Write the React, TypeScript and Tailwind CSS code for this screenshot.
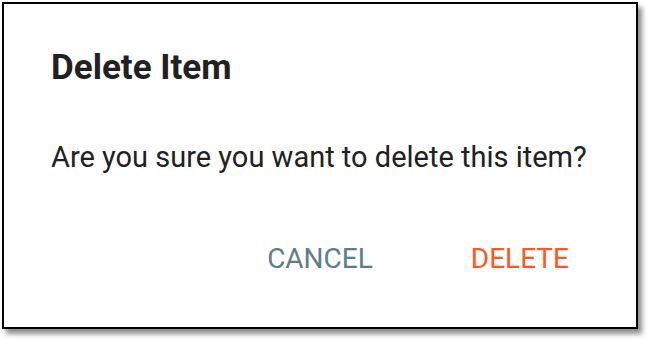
import React from 'react';

const App: React.FC = () => {
  return (
    <div className="w-[648px] h-[340px] bg-white p-[2px]" style={{ fontFamily: 'Roboto, "Liberation Sans", sans-serif' }}>
      <div className="w-[636px] h-[327px] border-2 border-black bg-white shadow-[4px_5px_5px_rgba(0,0,0,0.45)] flex flex-col">
        {/* Title */}
        <h2 className="pl-[47px] pt-[38px] text-[35px] leading-[52px] font-bold text-[#212121]">
          Delete Item
        </h2>

        {/* Body */}
        <p className="pl-[47px] pt-[43px] text-[29px] leading-[40px] text-[#212121]">
          Are you sure you want to delete this item?
        </p>

        {/* Actions */}
        <div className="flex justify-end items-center gap-[98px] pr-[67px] pt-[64px]">
          <button className="text-[28px] leading-[36px] font-normal text-[#607d8b]">
            CANCEL
          </button>
          <button className="text-[28px] leading-[36px] font-normal text-[#ff5722]">
            DELETE
          </button>
        </div>
      </div>
    </div>
  );
};

export default App;
